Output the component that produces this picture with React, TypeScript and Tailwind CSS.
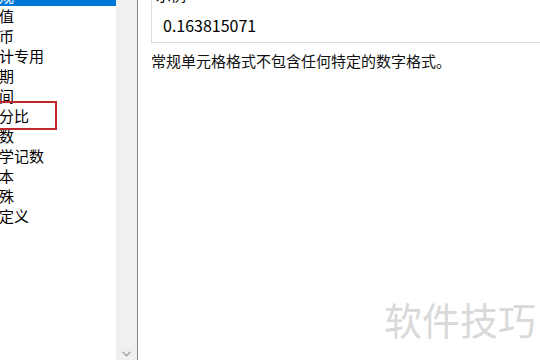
import React from "react";

const items = ["常规", "数值", "货币", "会计专用", "日期", "时间", "百分比", "分数", "科学记数", "文本", "特殊", "自定义"];

export default function App() {
  const font = { fontFamily: '"Noto Sans CJK SC", "Noto Sans", sans-serif' };
  return (
    <div className="relative flex h-[360px] w-[540px] overflow-hidden bg-white text-black" style={font}>
      {/* list */}
      <div className="relative w-[116px] shrink-0 overflow-hidden">
        <div className="ml-[-16px] mt-[-14px] flex w-[132px] flex-col">
          {items.map((t, i) => (
            <div
              key={t}
              className={
                i === 0
                  ? "h-[20px] bg-[#0078d7] text-[15px] leading-[20px] text-white"
                  : "h-[20px] text-[15px] leading-[20px] text-black"
              }
            >
              {t}
            </div>
          ))}
        </div>
        <div className="absolute left-[-2px] top-[101px] h-[29px] w-[59px] border-2 border-[#c0282e]" />
      </div>
      {/* scrollbar */}
      <div className="relative w-[21px] shrink-0 bg-[#f0f0f0]">
        <svg className="absolute bottom-[3px] left-[6px]" width="9" height="6" viewBox="0 0 9 6">
          <path d="M0.5 0.8 L4.5 4.8 L8.5 0.8" fill="none" stroke="#a3a3a3" strokeWidth="1.3" />
        </svg>
      </div>
      <div className="w-px shrink-0 bg-[#828282]" />
      {/* right panel */}
      <div className="flex flex-1 flex-col pl-[13px]">
        <div className="mt-[-30px] flex h-[73px] w-[420px] flex-col border border-[#dcdcdc] pt-[14px]">
          <div className="pl-[4px] text-[15px] leading-[20px]">示例</div>
          <div className="mt-[8px] pl-[11px] text-[16px] leading-[24px]">0.163815071</div>
        </div>
        <div className="mt-[8px] text-[15px] leading-[20px] text-[#111]">常规单元格格式不包含任何特定的数字格式。</div>
      </div>
      <div className="absolute left-[384px] top-[300px] text-[38px] leading-[38px] text-[#d9d9d9]">软件技巧</div>
    </div>
  );
}
